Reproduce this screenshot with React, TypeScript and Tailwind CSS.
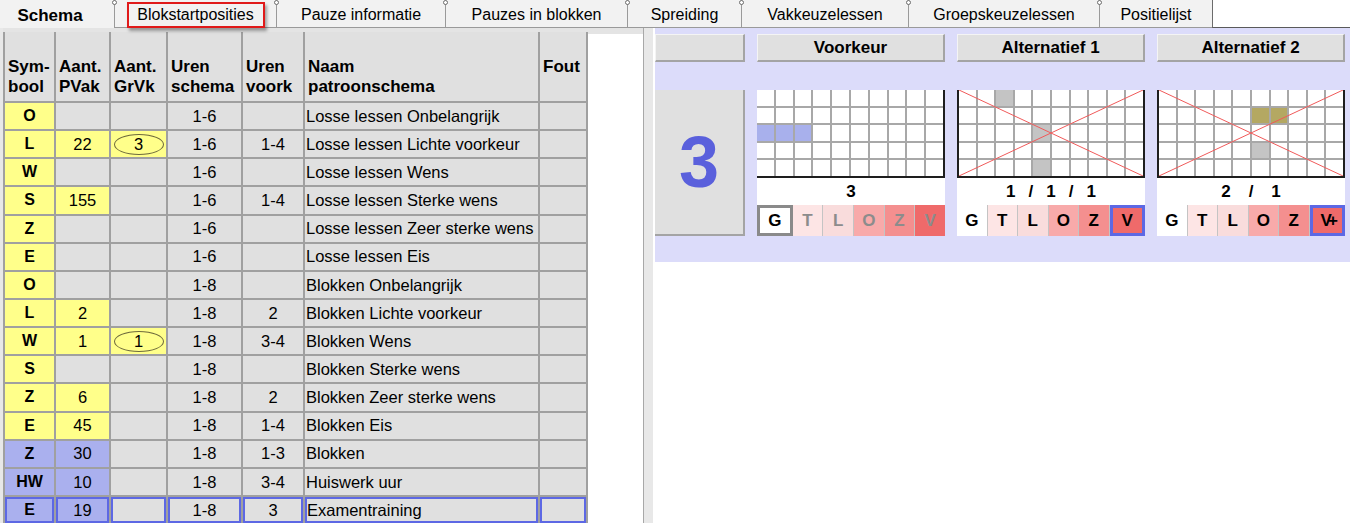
import React from "react";

type Row = {
  sym: string;
  symC: "y" | "b";
  pv?: string;
  pvC?: "y" | "b";
  gr?: string;
  us: string;
  uv?: string;
  name: string;
};

const rows: Row[] = [
  { sym: "O", symC: "y", us: "1-6", name: "Losse lessen Onbelangrijk" },
  { sym: "L", symC: "y", pv: "22", pvC: "y", gr: "3", us: "1-6", uv: "1-4", name: "Losse lessen Lichte voorkeur" },
  { sym: "W", symC: "y", us: "1-6", name: "Losse lessen Wens" },
  { sym: "S", symC: "y", pv: "155", pvC: "y", us: "1-6", uv: "1-4", name: "Losse lessen Sterke wens" },
  { sym: "Z", symC: "y", us: "1-6", name: "Losse lessen Zeer sterke wens" },
  { sym: "E", symC: "y", us: "1-6", name: "Losse lessen Eis" },
  { sym: "O", symC: "y", us: "1-8", name: "Blokken Onbelangrijk" },
  { sym: "L", symC: "y", pv: "2", pvC: "y", us: "1-8", uv: "2", name: "Blokken Lichte voorkeur" },
  { sym: "W", symC: "y", pv: "1", pvC: "y", gr: "1", us: "1-8", uv: "3-4", name: "Blokken Wens" },
  { sym: "S", symC: "y", us: "1-8", name: "Blokken Sterke wens" },
  { sym: "Z", symC: "y", pv: "6", pvC: "y", us: "1-8", uv: "2", name: "Blokken Zeer sterke wens" },
  { sym: "E", symC: "y", pv: "45", pvC: "y", us: "1-8", uv: "1-4", name: "Blokken Eis" },
  { sym: "Z", symC: "b", pv: "30", pvC: "b", us: "1-8", uv: "1-3", name: "Blokken" },
  { sym: "HW", symC: "b", pv: "10", pvC: "b", us: "1-8", uv: "3-4", name: "Huiswerk uur" },
  { sym: "E", symC: "b", pv: "19", pvC: "b", us: "1-8", uv: "3", name: "Examentraining" },
];

const tabs = [
  { label: "Schema", w: "w-[114px]" },
  { label: "Blokstartposities", w: "w-[162px]" },
  { label: "Pauze informatie", w: "w-[169px]" },
  { label: "Pauzes in blokken", w: "w-[182px]" },
  { label: "Spreiding", w: "w-[114px]" },
  { label: "Vakkeuzelessen", w: "w-[167px]" },
  { label: "Groepskeuzelessen", w: "w-[191px]" },
  { label: "Positielijst", w: "w-[113px]" },
];

const bgOf = (c?: "y" | "b") =>
  c === "y" ? "bg-[#ffff8a]" : c === "b" ? "bg-[#aab0ee]" : "bg-[#e0e0e0]";

function Cell({
  children,
  bg,
  sel,
  className = "",
}: {
  children?: React.ReactNode;
  bg: string;
  sel: boolean;
  className?: string;
}) {
  return (
    <div
      className={`${bg} ${sel ? "border-2 border-[#5d68e4]" : ""} flex items-center overflow-hidden whitespace-nowrap ${className}`}
    >
      {children}
    </div>
  );
}

function Table() {
  const heads: [string, string][] = [
    ["Sym-", "bool"],
    ["Aant.", "PVak"],
    ["Aant.", "GrVk"],
    ["Uren", "schema"],
    ["Uren", "voork"],
    ["Naam", "patroonschema"],
    ["Fout", ""],
  ];
  return (
    <div className="grid grid-cols-[49px_53px_55px_73px_60px_233px_46px] grid-rows-[69px] auto-rows-[26.15px] gap-[2px] bg-[#a0a0a0] px-[2px] w-[585px] shrink-0">
      {heads.map(([a, b], i) => (
        <div
          key={i}
          className="bg-[#e0e0e0] pt-[25px] px-[3px] font-bold text-[17px] leading-[20px] text-black whitespace-nowrap overflow-hidden"
        >
          <div>{a}</div>
          {b && <div>{b}</div>}
        </div>
      ))}
      {rows.map((r, i) => {
        const sel = i === rows.length - 1;
        return (
          <React.Fragment key={i}>
            <Cell bg={bgOf(r.symC)} sel={sel} className="justify-center font-bold text-[16px]">
              {r.sym}
            </Cell>
            <Cell bg={bgOf(r.pvC)} sel={sel} className="justify-center text-[16.5px]">
              {r.pv}
            </Cell>
            <Cell bg={r.gr ? "bg-[#ffff8a]" : "bg-[#e0e0e0]"} sel={sel} className="justify-center text-[16.5px]">
              {r.gr && (
                <span className="inline-flex items-center justify-center w-[50px] h-[21px] rounded-[50%] border border-[#6e6a3c] leading-none">
                  {r.gr}
                </span>
              )}
            </Cell>
            <Cell bg="bg-[#e0e0e0]" sel={sel} className="justify-center text-[16.5px]">
              {r.us}
            </Cell>
            <Cell bg="bg-[#e0e0e0]" sel={sel} className="justify-center text-[16.5px]">
              {r.uv}
            </Cell>
            <Cell bg="bg-[#e0e0e0]" sel={sel} className={`${sel ? "pl-0" : "pl-[1px]"} text-[16.5px]`}>
              {r.name}
            </Cell>
            <Cell bg="bg-[#e0e0e0]" sel={sel} />
          </React.Fragment>
        );
      })}
    </div>
  );
}

function HeadBtn({ label, w }: { label?: string; w: string }) {
  return (
    <div
      className={`${w} h-[28px] bg-[#e0e0e0] border-r-2 border-b-2 border-[#a4a4a4] border-t border-l border-t-[#f4f4f4] border-l-[#f4f4f4] flex items-center justify-center font-bold text-[17px]`}
    >
      {label}
    </div>
  );
}

type Card = {
  cells: Record<string, string>;
  crossed: boolean;
  label: React.ReactNode;
  variant: "pref" | "alt1" | "alt2";
};

const letterBgs = [
  "bg-white",
  "bg-[#fde5e5]",
  "bg-[#f9dcdc]",
  "bg-[#f8aaaa]",
  "bg-[#f48f8f]",
  "bg-[#ef6a6a]",
];

function CardView({ card }: { card: Card }) {
  const letters = ["G", "T", "L", "O", "Z", card.variant === "alt2" ? "V+" : "V"];
  return (
    <div className="w-[188px] flex flex-col">
      <div
        className={`relative h-[88px] grid grid-cols-10 grid-rows-5 gap-[2px] bg-[#a8a8a8] border-b-2 border-r-2 border-[#1e1e1e] ${
          card.variant === "pref" ? "" : "border-l-2"
        }`}
      >
        {Array.from({ length: 50 }).map((_, k) => {
          const r = Math.floor(k / 10);
          const c = k % 10;
          const color = card.cells[`${r}-${c}`] ?? "bg-white";
          return <div key={k} className={color} />;
        })}
        {card.crossed && (
          <svg
            className="absolute inset-0 w-full h-full pointer-events-none"
            viewBox="0 0 100 100"
            preserveAspectRatio="none"
          >
            <line x1="0" y1="0" x2="100" y2="100" stroke="#f05a5a" strokeWidth="1" vectorEffect="non-scaling-stroke" />
            <line x1="0" y1="100" x2="100" y2="0" stroke="#f05a5a" strokeWidth="1" vectorEffect="non-scaling-stroke" />
          </svg>
        )}
      </div>
      <div className="h-[27px] bg-white flex items-center justify-center font-bold text-[17px]">
        {card.label}
      </div>
      <div className="h-[31px] flex">
        {letters.map((l, i) => {
          const isPref = card.variant === "pref";
          let extra = "";
          if (isPref && i === 0) extra = "border-[3px] border-[#8a8a8a]";
          else if (!isPref && i === 5) extra = "border-[3px] border-[#5d68e4]";
          else if (i < 5) extra = "border-r border-[#c4c4c4]";
          const txt = isPref && i > 0 ? "text-[#8c8c8c]" : "text-black";
          return (
            <div
              key={i}
              className={`flex-1 ${letterBgs[i]} ${extra} ${txt} flex items-center justify-center font-bold text-[17px] ${
                l === "V+" ? "tracking-[-4px]" : ""
              }`}
            >
              {l}
            </div>
          );
        })}
      </div>
    </div>
  );
}

const cards: Card[] = [
  {
    variant: "pref",
    crossed: false,
    cells: { "2-0": "bg-[#a8b0ec]", "2-1": "bg-[#a8b0ec]", "2-2": "bg-[#a8b0ec]" },
    label: "3",
  },
  {
    variant: "alt1",
    crossed: true,
    cells: { "0-2": "bg-[#c4c4c4]", "2-4": "bg-[#c4c4c4]", "4-4": "bg-[#c4c4c4]" },
    label: (
      <span className="flex gap-[13px]">
        <span>1</span>
        <span>/</span>
        <span>1</span>
        <span>/</span>
        <span>1</span>
      </span>
    ),
  },
  {
    variant: "alt2",
    crossed: true,
    cells: { "1-5": "bg-[#b4a862]", "1-6": "bg-[#b4a862]", "3-5": "bg-[#c4c4c4]" },
    label: (
      <span className="flex gap-[18px]">
        <span>2</span>
        <span>/</span>
        <span>1</span>
      </span>
    ),
  },
];

export default function App() {
  return (
    <div className="w-[1350px] h-[523px] overflow-hidden bg-[#e4e4e4] text-black font-['Liberation_Sans',Arial,sans-serif] flex flex-col">
      {/* tab strip */}
      <div className="h-[28px] flex bg-white shrink-0">
        {tabs.map((t, i) => (
          <div
            key={t.label}
            className={`${t.w} relative h-full flex items-center justify-center pt-[3px] bg-[#f2f2f2] ${
              i > 0 ? "border-l border-[#6c6c6c]" : ""
            } ${i === 0 ? "font-bold text-[17px] pr-[14px]" : "text-[16px] border-b border-[#9a9a9a]"}`}
          >
            {i > 0 && (
              <span className="absolute -left-[3px] top-0 w-[5px] h-[5px] rounded-full border border-[#6c6c6c] bg-white" />
            )}
            <span>{t.label}</span>
            {i === 1 && (
              <span className="absolute left-[12px] top-[2px] w-[138px] h-[26px] border-2 border-[#e01a1a] shadow-[2px_3px_3px_rgba(0,0,0,0.35)]" />
            )}
          </div>
        ))}
        <div className="flex-1 border-l border-[#6c6c6c] border-b border-b-[#5a5a5a] bg-white" />
      </div>

      {/* content */}
      <div className="flex-1 flex min-h-0">
        <div className="w-[3px] bg-[#e8e8e8] shrink-0" />
        <div className="pt-[4px] shrink-0">
          <Table />
        </div>
        <div className="w-[55px] mt-[6px] bg-white shrink-0" />
        <div className="w-[12px] shrink-0 border-l border-[#a8a8a8] bg-[#e8e8e8] border-r-2 border-r-white" />
        <div className="flex-1 flex flex-col bg-white">
          <div className="bg-[#dcdcfa] pt-[6px] pb-[26px]">
            <div className="flex gap-[12px]">
              <HeadBtn w="w-[90px]" />
              <HeadBtn w="w-[188px]" label="Voorkeur" />
              <HeadBtn w="w-[188px]" label="Alternatief 1" />
              <HeadBtn w="w-[188px]" label="Alternatief 2" />
            </div>
            <div className="h-[28px]" />
            <div className="flex gap-[12px]">
              <div className="w-[90px] h-[146px] bg-[#e0e0e0] border-r-2 border-b-2 border-[#a4a4a4] flex items-center justify-center">
                <span className="font-bold text-[72px] leading-none text-[#5a60dc]">3</span>
              </div>
              {cards.map((c, i) => (
                <CardView key={i} card={c} />
              ))}
            </div>
          </div>
        </div>
      </div>
    </div>
  );
}
